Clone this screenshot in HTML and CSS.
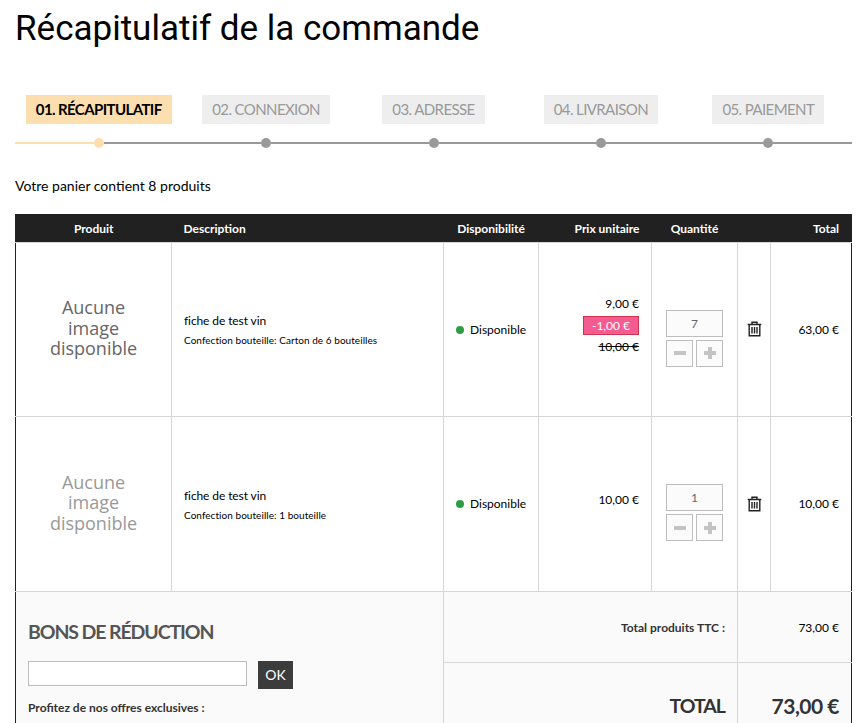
FILE: index.html
```html
<!DOCTYPE html>
<html lang="fr">
<head>
  <meta charset="UTF-8" />
  <title>Récapitulatif de la commande</title>
  <link rel="stylesheet" href="styles.css">
</head>
<body>
  <div class="container">
    <h1>Récapitulatif de la commande</h1>

    <ul class="steps">
      <li class="step done">
        <span class="step-label">01. Récapitulatif</span>
        <div class="track"><i class="seg"></i><i class="dot"></i><i class="seg next"></i></div>
      </li>
      <li class="step">
        <span class="step-label">02. Connexion</span>
        <div class="track"><i class="seg"></i><i class="dot"></i><i class="seg"></i></div>
      </li>
      <li class="step">
        <span class="step-label">03. Adresse</span>
        <div class="track"><i class="seg"></i><i class="dot"></i><i class="seg"></i></div>
      </li>
      <li class="step">
        <span class="step-label">04. Livraison</span>
        <div class="track"><i class="seg"></i><i class="dot"></i><i class="seg"></i></div>
      </li>
      <li class="step">
        <span class="step-label">05. Paiement</span>
        <div class="track"><i class="seg"></i><i class="dot"></i><i class="seg"></i></div>
      </li>
    </ul>

    <p class="count">Votre panier contient 8 produits</p>

    <table class="cart">
      <colgroup>
        <col class="c-img"><col class="c-desc"><col class="c-avail"><col class="c-price"><col class="c-qty"><col class="c-del"><col class="c-total">
      </colgroup>
      <thead>
        <tr>
          <th class="center">Produit</th>
          <th class="left">Description</th>
          <th class="center">Disponibilité</th>
          <th class="right">Prix unitaire</th>
          <th class="center">Quantité</th>
          <th></th>
          <th class="right">Total</th>
        </tr>
      </thead>
      <tbody>
        <tr class="item">
          <td class="thumb"><div class="no-image">Aucune<br>image<br>disponible</div></td>
          <td class="desc">
            <p class="name">fiche de test vin</p>
            <p class="attr">Confection bouteille: Carton de 6 bouteilles</p>
          </td>
          <td class="avail"><span class="green"></span>Disponible</td>
          <td class="right price">
            <div>9,00 €</div>
            <div class="promo">-1,00 €</div>
            <div class="old">10,00 €</div>
          </td>
          <td class="qty">
            <div class="qty-box">
              <div class="qty-input">7</div>
              <div class="qty-btn">
                <span class="qbtn"><svg width="12" height="12" viewBox="0 0 12 12"><rect y="4" width="12" height="4"/></svg></span>
                <span class="qbtn"><svg width="12" height="12" viewBox="0 0 12 12"><path d="M4 0h4v4h4v4H8v4H4V8H0V4h4z"/></svg></span>
              </div>
            </div>
          </td>
          <td class="del">
            <svg class="trash" width="15" height="16" viewBox="0 0 15 16"><path d="M5 3.500V1.200h5v2.300M.7 3.500h13.600M2.200 3.500v11.300h10.600V3.500M5 6v6.500M7.500 6v6.500M10 6v6.500" fill="none" stroke="#222" stroke-width="1.400"/></svg>
          </td>
          <td class="right">63,00 €</td>
        </tr>
        <tr class="item">
          <td class="thumb"><div class="no-image light">Aucune<br>image<br>disponible</div></td>
          <td class="desc">
            <p class="name">fiche de test vin</p>
            <p class="attr">Confection bouteille: 1 bouteille</p>
          </td>
          <td class="avail"><span class="green"></span>Disponible</td>
          <td class="right price"><div>10,00 €</div></td>
          <td class="qty">
            <div class="qty-box">
              <div class="qty-input">1</div>
              <div class="qty-btn">
                <span class="qbtn"><svg width="12" height="12" viewBox="0 0 12 12"><rect y="4" width="12" height="4"/></svg></span>
                <span class="qbtn"><svg width="12" height="12" viewBox="0 0 12 12"><path d="M4 0h4v4h4v4H8v4H4V8H0V4h4z"/></svg></span>
              </div>
            </div>
          </td>
          <td class="del">
            <svg class="trash" width="15" height="16" viewBox="0 0 15 16"><path d="M5 3.500V1.200h5v2.300M.7 3.500h13.600M2.200 3.500v11.300h10.600V3.500M5 6v6.500M7.500 6v6.500M10 6v6.500" fill="none" stroke="#222" stroke-width="1.400"/></svg>
          </td>
          <td class="right">10,00 €</td>
        </tr>
      </tbody>
      <tfoot>
        <tr class="sub">
          <td colspan="2" rowspan="2" class="voucher">
            <h2>Bons de réduction</h2>
            <div class="voucher-form">
              <input type="text" class="voucher-input">
              <span class="ok">OK</span>
            </div>
            <p class="offers">Profitez de nos offres exclusives :</p>
          </td>
          <td colspan="3" class="right sub-label">Total produits TTC :</td>
          <td colspan="2" class="right sub-value">73,00 €</td>
        </tr>
        <tr class="grand">
          <td colspan="3" class="right grand-label">Total</td>
          <td colspan="2" class="right grand-value">73,00 €</td>
        </tr>
      </tfoot>
    </table>
  </div>
</body>
</html>
```

FILE: styles.css
```css
* {
  box-sizing: border-box;
  margin: 0;
  padding: 0;
}

html, body {
  height: 723px;
  overflow: hidden;
}

body {
  background: #fff;
  color: #000;
  font-family: 'Lato', sans-serif;
  font-size: 13px;
}

.container {
  padding: 0 16px 0 15px;
}

h1 {
  font-family: 'Roboto', sans-serif;
  font-weight: 400;
  font-size: 35px;
  line-height: 40px;
  padding-top: 9px;
  margin-bottom: 46px;
}

.steps {
  list-style: none;
  display: grid;
  grid-template-columns: repeat(5, 1fr);
}

.step {
  display: flex;
  flex-direction: column;
  align-items: center;
}

.step-label {
  background: #eee;
  color: #999;
  font-size: 15px;
  letter-spacing: -0.6px;
  line-height: 29px;
  padding: 0 10px;
  text-transform: uppercase;
}

.done .step-label {
  background: #fddfaf;
  color: #000;
  font-weight: 700;
}

.track {
  display: flex;
  align-items: center;
  width: 100%;
  height: 10px;
  margin-top: 14px;
}

.seg {
  flex: 1;
  height: 2px;
  background: #999;
}

.dot {
  width: 10px;
  height: 10px;
  border-radius: 50%;
  background: #999;
}

.done .seg, .done .dot {
  background: #fddfaf;
}

.done .seg.next {
  background: #999;
}

.count {
  font-size: 14px;
  line-height: 20px;
  margin-top: 28px;
  margin-bottom: 18px;
}

.cart {
  width: 836px;
  table-layout: fixed;
  border-collapse: collapse;
  border-left: 1px solid #212121;
  border-right: 1px solid #212121;
}

.c-img { width: 156px; }
.c-desc { width: 272px; }
.c-avail { width: 95px; }
.c-price { width: 113px; }
.c-qty { width: 86px; }
.c-del { width: 33px; }
.c-total { width: 81px; }

.cart th {
  background: #212121;
  color: #fff;
  font-size: 12px;
  font-weight: 700;
  height: 28px;
  padding: 1px 12px 0;
}

.center { text-align: center; }
.left { text-align: left; }
.right { text-align: right; }

.cart td {
  border: 1px solid #d6d6d6;
  padding: 0 12px;
  font-size: 12px;
  vertical-align: middle;
}

.cart tr td:first-child { border-left: 0; }
.cart tr td:last-child { border-right: 0; }

.item td {
  height: 175px;
}

tbody .item:first-child td {
  height: 174px;
}

.cart td.thumb {
  padding: 0 0 2px;
  text-align: center;
}

.no-image {
  font-family: 'Open Sans', sans-serif;
  font-size: 18px;
  line-height: 20.5px;
  color: #666;
}

.no-image.light {
  color: #999;
}

.cart td.desc {
  padding-top: 2px;
}

.name {
  font-size: 12px;
  letter-spacing: -0.1px;
  line-height: 16px;
  margin-bottom: 4px;
}

.attr {
  font-size: 10px;
  letter-spacing: 0.05px;
  line-height: 14px;
}

.avail {
  white-space: nowrap;
}

.green {
  display: inline-block;
  width: 8px;
  height: 8px;
  border-radius: 50%;
  background: #2e9e45;
  margin-right: 6px;
}

.cart td.price {
  line-height: 16px;
  padding-bottom: 8px;
}

.promo {
  display: inline-block;
  width: 56px;
  height: 19px;
  line-height: 17px;
  margin: 4px 0;
  background: #f45c91;
  border: 1px solid #d3324f;
  color: #fff;
  text-align: center;
}

.old {
  text-decoration: line-through;
}

.cart td.qty {
  padding-top: 18px;
}

.qty-box {
  width: 57px;
  margin: 0 auto;
}

.qty-input {
  height: 27px;
  line-height: 25px;
  border: 1px solid #bdbdbd;
  background: #fbfbfb;
  color: #666;
  text-align: center;
}

.qty-btn {
  display: flex;
  justify-content: space-between;
  margin-top: 3px;
}

.qbtn {
  display: flex;
  align-items: center;
  justify-content: center;
  width: 27px;
  height: 27px;
  border: 1px solid #bdbdbd;
  background: #fbfbfb;
}

.qbtn svg {
  fill: #c4c4c4;
}

.cart td.del {
  padding: 0;
  text-align: center;
}

.trash {
  display: block;
  margin: 0 auto;
}

tfoot td {
  background: #fafafa;
}

.sub td {
  height: 71px;
}

.grand td {
  height: 80px;
}

.cart td.sub-label, .cart td.sub-value {
  padding-top: 2px;
}

.sub-label {
  font-weight: 700;
  color: #333;
}

.cart td.voucher {
  vertical-align: top;
  padding: 28px 12px 0;
}

h2 {
  font-size: 19.5px;
  letter-spacing: -1.1px;
  line-height: 24px;
  font-weight: 700;
  color: #555;
  text-transform: uppercase;
  margin-bottom: 17px;
}

.voucher-form {
  display: flex;
  align-items: flex-start;
  gap: 11px;
}

.voucher-input {
  width: 219px;
  height: 25px;
  border: 1px solid #bdbdbd;
  background: #fff;
}

.ok {
  width: 35px;
  height: 28px;
  line-height: 28px;
  background: #3c3c3c;
  color: #fff;
  font-size: 14px;
  text-align: center;
}

.offers {
  font-weight: 700;
  color: #333;
  font-size: 12px;
  margin-top: 11px;
}

.cart td.grand-label {
  font-size: 19.5px;
  letter-spacing: -1px;
  font-weight: 700;
  color: #333;
  text-transform: uppercase;
  vertical-align: top;
  padding-top: 31px;
}

.cart td.grand-value {
  font-size: 21px;
  letter-spacing: -0.5px;
  font-weight: 700;
  color: #333;
  vertical-align: top;
  padding-top: 30px;
}
```
